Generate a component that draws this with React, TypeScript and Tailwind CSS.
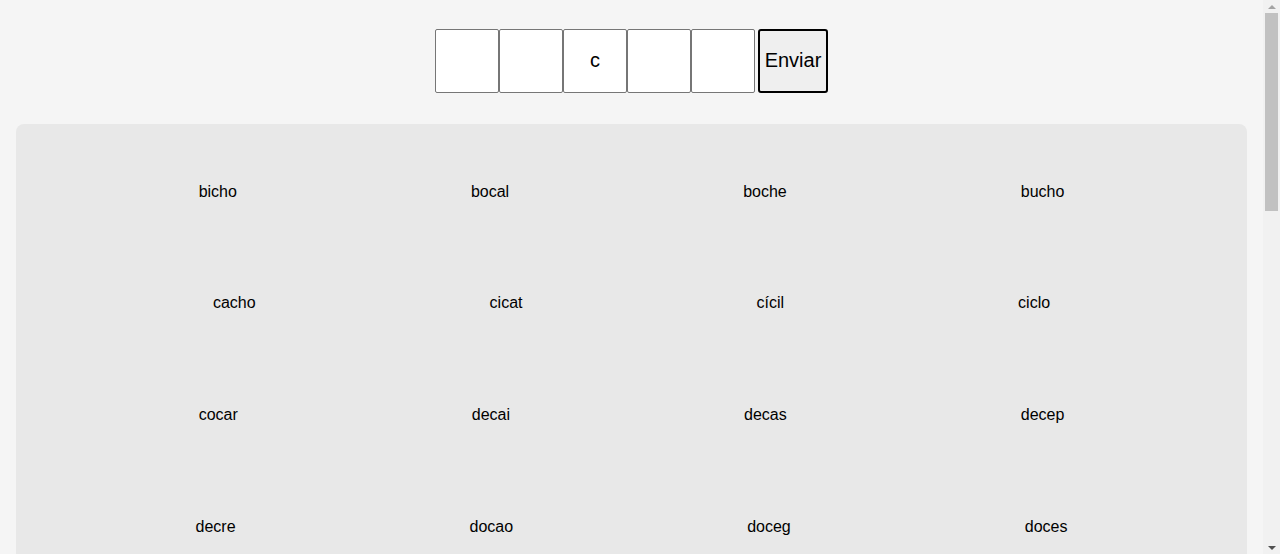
const words = [
  'bicho', 'bocal', 'boche', 'bucho',
  'cacho', 'cicat', 'cícil', 'ciclo',
  'cocar', 'decai', 'decas', 'decep',
  'decre', 'docao', 'doceg', 'doces',
  'ducal', 'ducha', 'ducto', 'fecal',
  'fecho', 'ficar', 'ficha', 'focal',
  'focar', 'focos', 'jacto', 'lacre',
  'licor', 'locar', 'lucro', 'macio',
  'macro', 'mecha', 'micro', 'mocho',
  'nacos', 'nicho', 'pacto', 'pecar',
  'picar', 'racha', 'rocha', 'secar',
];

const letters = ['', '', 'c', '', ''];

function Scrollbar() {
  return (
    <div className="fixed top-0 right-0 w-[17px] h-screen bg-[#f1f1f1] flex flex-col items-center">
      <div className="h-[13px] flex items-center justify-center">
        <div className="w-0 h-0 border-x-[4px] border-x-transparent border-b-[4px] border-b-[#a3a3a3]" />
      </div>
      <div className="w-[13px] h-[198px] bg-[#c1c1c1]" />
      <div className="flex-1" />
      <div className="h-[13px] flex items-center justify-center">
        <div className="w-0 h-0 border-x-[4px] border-x-transparent border-t-[4px] border-t-[#505050]" />
      </div>
    </div>
  );
}

export default function App() {
  return (
    <div className="min-h-screen bg-[#f5f5f5] text-black pr-[17px] font-['Liberation_Sans',Arial,sans-serif]">
      {/* guess row */}
      <div className="flex items-center justify-center pt-[29px]">
        {letters.map((l, i) => (
          <input
            key={i}
            readOnly
            value={l}
            maxLength={1}
            className="w-16 h-16 pb-[2px] border border-[#767676] rounded-[2px] bg-white text-center text-[20px] outline-none"
          />
        ))}
        <button className="ml-[3px] w-[70px] h-16 pb-[2px] border-2 border-black rounded-[3px] bg-[#efefef] text-[20px]">
          Enviar
        </button>
      </div>

      {/* word list */}
      <div className="mx-4 mt-[31px] mb-4 rounded-lg bg-[#e8e8e8] pt-[12px] pb-[11px]">
        <div className="flex flex-wrap justify-center">
          {words.map((w) => (
            <div key={w} className="flex items-center h-[111.67px] px-[117px] text-base">
              {w}
            </div>
          ))}
        </div>
      </div>

      <Scrollbar />
    </div>
  );
}
